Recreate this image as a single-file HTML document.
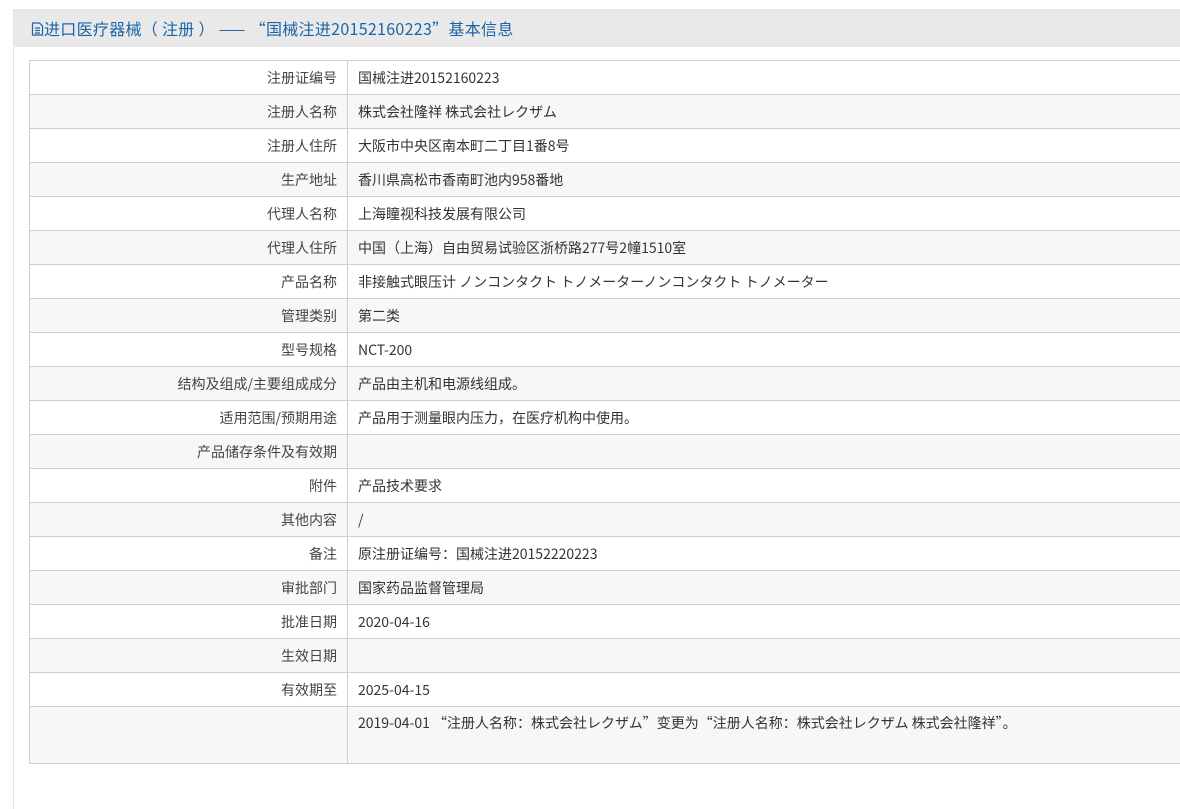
<!DOCTYPE html>
<html><head><meta charset="utf-8"><style>
body{margin:0;background:#fff;width:1180px;height:733px;overflow:hidden;font-family:"Noto Sans CJK SC","Liberation Sans",sans-serif;}
.panel{position:absolute;left:13px;top:9px;width:1180px;height:800px;border-left:1px solid #e4e4e4;}
.hd{height:38px;background:#e9e9e9;border-top:1px solid #e2e2e2;color:#1b65a8;font-size:16px;line-height:37px;padding-left:17px;box-sizing:border-box;white-space:nowrap;letter-spacing:0.3px;}
table{position:absolute;left:15px;top:51px;border-collapse:collapse;width:1170px;font-size:14px;}
td{height:33px;border:1px solid #cfcfcf;padding:0 10px;color:#333;white-space:nowrap;line-height:20px;}
td.l{width:297px;text-align:right;color:#444;}
tr:nth-child(even) td{background:#f7f7f7;}
tr.last td{height:50px;vertical-align:top;padding-top:6px;}
</style></head><body>
<div class="panel"><div class="hd"><svg width="13" height="14" viewBox="0 0 13 14" style="vertical-align:-1px"><path d="M1.5 1h7l3 3v9h-10z M4 6h5 M4 8.5h5 M4 11h5" fill="none" stroke="#1b65a8" stroke-width="1.2"/></svg>进口医疗器械（ 注册 ） —— “国械注进20152160223”基本信息</div>
<table>
<tr><td class="l">注册证编号</td><td>国械注进20152160223</td></tr>
<tr><td class="l">注册人名称</td><td>株式会社隆祥 株式会社レクザム</td></tr>
<tr><td class="l">注册人住所</td><td>大阪市中央区南本町二丁目1番8号</td></tr>
<tr><td class="l">生产地址</td><td>香川県高松市香南町池内958番地</td></tr>
<tr><td class="l">代理人名称</td><td>上海瞳视科技发展有限公司</td></tr>
<tr><td class="l">代理人住所</td><td>中国（上海）自由贸易试验区浙桥路277号2幢1510室</td></tr>
<tr><td class="l">产品名称</td><td>非接触式眼压计 ノンコンタクト トノメーターノンコンタクト トノメーター</td></tr>
<tr><td class="l">管理类别</td><td>第二类</td></tr>
<tr><td class="l">型号规格</td><td>NCT-200</td></tr>
<tr><td class="l">结构及组成/主要组成成分</td><td>产品由主机和电源线组成。</td></tr>
<tr><td class="l">适用范围/预期用途</td><td>产品用于测量眼内压力，在医疗机构中使用。</td></tr>
<tr><td class="l">产品储存条件及有效期</td><td></td></tr>
<tr><td class="l">附件</td><td>产品技术要求</td></tr>
<tr><td class="l">其他内容</td><td>/</td></tr>
<tr><td class="l">备注</td><td>原注册证编号：国械注进20152220223</td></tr>
<tr><td class="l">审批部门</td><td>国家药品监督管理局</td></tr>
<tr><td class="l">批准日期</td><td>2020-04-16</td></tr>
<tr><td class="l">生效日期</td><td></td></tr>
<tr><td class="l">有效期至</td><td>2025-04-15</td></tr>
<tr class="last"><td class="l"></td><td>2019-04-01 “注册人名称：株式会社レクザム”变更为“注册人名称：株式会社レクザム 株式会社隆祥”。</td></tr>
</table></div>
</body></html>
